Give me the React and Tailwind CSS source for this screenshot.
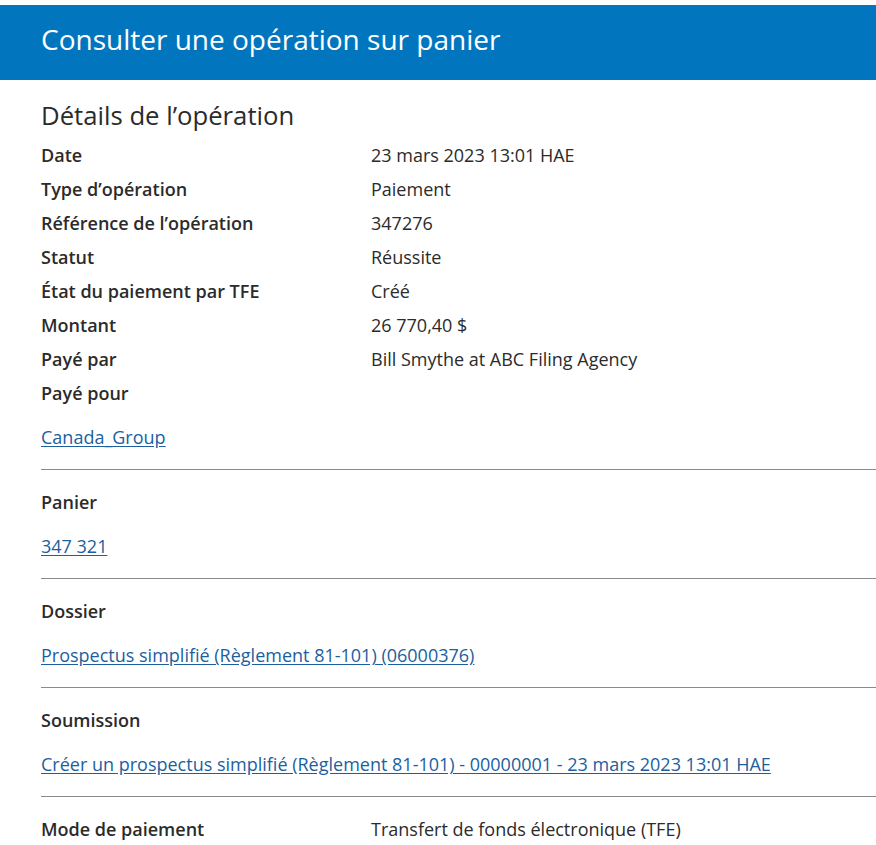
const ROWS = [
  ['Date', '23 mars 2023 13:01 HAE'],
  ['Type d’opération', 'Paiement'],
  ['Référence de l’opération', '347276'],
  ['Statut', 'Réussite'],
  ['État du paiement par TFE', 'Créé'],
  ['Montant', '26 770,40 $'],
  ['Payé par', 'Bill Smythe at ABC Filing Agency'],
  ['Payé pour', ''],
];

const SECTIONS = [
  ['Panier', '347 321'],
  ['Dossier', 'Prospectus simplifié (Règlement 81-101) (06000376)'],
  ['Soumission', 'Créer un prospectus simplifié (Règlement 81-101) - 00000001 - 23 mars 2023 13:01 HAE'],
];

function Row({ label, value }) {
  return (
    <div className="flex h-[34px] items-center">
      <div className="w-[330px] shrink-0 font-semibold">{label}</div>
      <div>{value}</div>
    </div>
  );
}

function Link({ children }) {
  return (
    <div className="h-6 leading-6">
      <a href="#" className="text-[#1b5f9f] underline underline-offset-2">{children}</a>
    </div>
  );
}

export default function App() {
  return (
    <div className="min-h-[845px] bg-white pt-[5px] text-[18px] text-[#2b2b2b]" style={{ fontFamily: '"Open Sans", "Noto Sans", sans-serif' }}>
      <header className="flex h-[75px] items-center bg-[#0176bf] px-[41px] pb-[7px]">
        <h1 className="text-[28px] font-normal text-white">Consulter une opération sur panier</h1>
      </header>

      <main className="pl-[41px]">
        <h2 className="mt-[19px] h-[34px] text-[25.7px] leading-[34px] font-normal">Détails de l’opération</h2>
        <div className="mt-[5px]">
          {ROWS.map(([l, v]) => <Row key={l} label={l} value={v} />)}
        </div>
        <div className="mt-[15px] pb-[20px]">
          <Link>Canada_Group</Link>
        </div>

        {SECTIONS.map(([label, link]) => (
          <section key={label} className="border-t border-[#8a8a8a] pt-[15px] pb-[20px]">
            <div className="flex h-[34px] items-center font-semibold">{label}</div>
            <div className="mt-[15px]">
              <Link>{link}</Link>
            </div>
          </section>
        ))}

        <section className="border-t border-[#8a8a8a] pt-[15px]">
          <Row label="Mode de paiement" value="Transfert de fonds électronique (TFE)" />
        </section>
      </main>
    </div>
  );
}
